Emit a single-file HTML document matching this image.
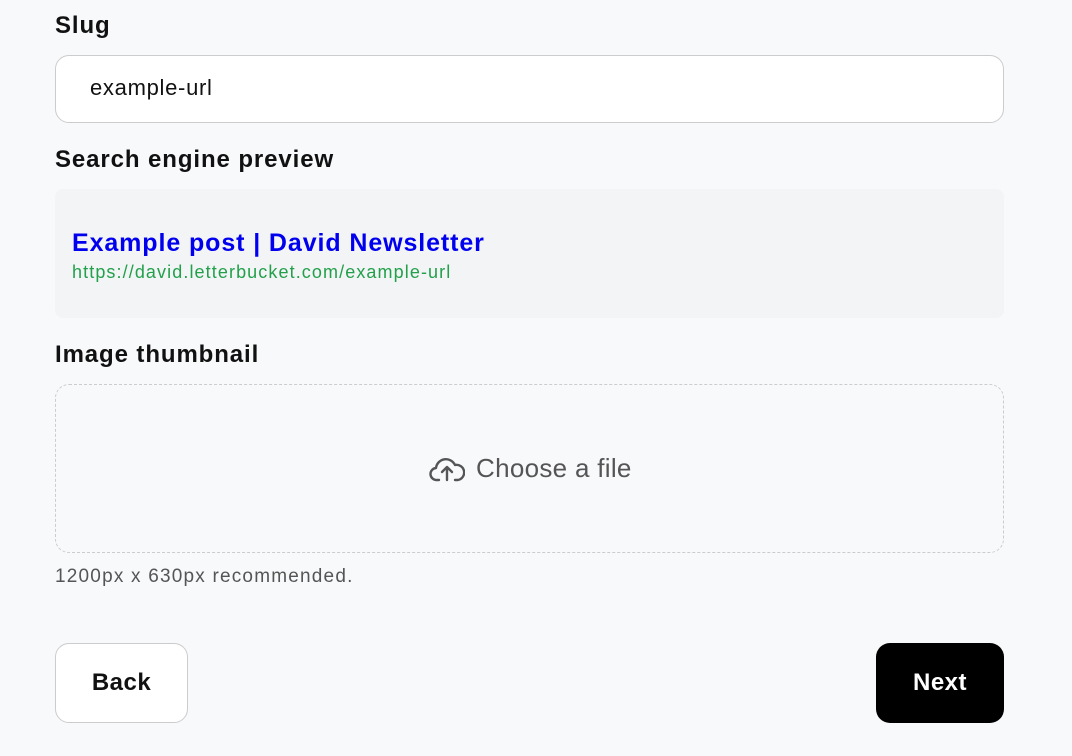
<!DOCTYPE html>
<html><head><style>
body{margin:0;width:1072px;height:756px;background:#f8f9fb;font-family:"Liberation Sans",sans-serif;position:relative;overflow:hidden;color:#111}
.abs{position:absolute}
.lbl{font-size:24px;font-weight:bold;left:55px;letter-spacing:0.9px}
</style></head><body>
<div class="abs lbl" style="top:12px">Slug</div>
<div class="abs" style="left:55px;top:55px;width:947px;height:66px;background:#fff;border:1px solid #ccc;border-radius:14px"></div>
<div class="abs" style="left:90px;top:75px;font-size:22px;letter-spacing:0.7px">example-url</div>
<div class="abs lbl" style="top:146px">Search engine preview</div>
<div class="abs" style="left:55px;top:189px;width:949px;height:129px;background:#f3f4f6;border-radius:8px"></div>
<div class="abs" style="left:72px;top:229px;font-size:25px;font-weight:bold;color:#0000ee;letter-spacing:0.9px">Example post | David Newsletter</div>
<div class="abs" style="left:72px;top:262px;font-size:18px;color:#22a04b;letter-spacing:1.1px">https://david.letterbucket.com/example-url</div>
<div class="abs lbl" style="top:341px">Image thumbnail</div>
<div class="abs" style="left:55px;top:384px;width:947px;height:167px;border:1px dashed #ccc;border-radius:14px"></div>
<svg class="abs" style="left:429px;top:452px" width="36" height="32" viewBox="0 0 36 32" fill="none" stroke="#555" stroke-width="2.4" stroke-linecap="round" stroke-linejoin="round"><path d="M10 28H8a6 6 0 0 1-1-12 10 10 0 0 1 19-3 7 7 0 0 1 3 15h-3"/><path d="M18 28V16M13 20l5-5 5 5"/></svg>
<div class="abs" style="left:476px;top:453px;font-size:26px;color:#555;letter-spacing:0.3px">Choose a file</div>
<div class="abs" style="left:55px;top:566px;font-size:19px;color:#555;letter-spacing:1.2px">1200px x 630px recommended.</div>
<div class="abs" style="left:55px;top:643px;width:131px;height:78px;background:#fff;border:1px solid #ccc;border-radius:14px;font-size:24px;font-weight:bold;display:flex;align-items:center;justify-content:center;letter-spacing:0.5px">Back</div>
<div class="abs" style="left:876px;top:643px;width:128px;height:80px;background:#000;color:#fff;border-radius:14px;font-size:24px;font-weight:bold;display:flex;align-items:center;justify-content:center;letter-spacing:0.5px">Next</div>
</body></html>
